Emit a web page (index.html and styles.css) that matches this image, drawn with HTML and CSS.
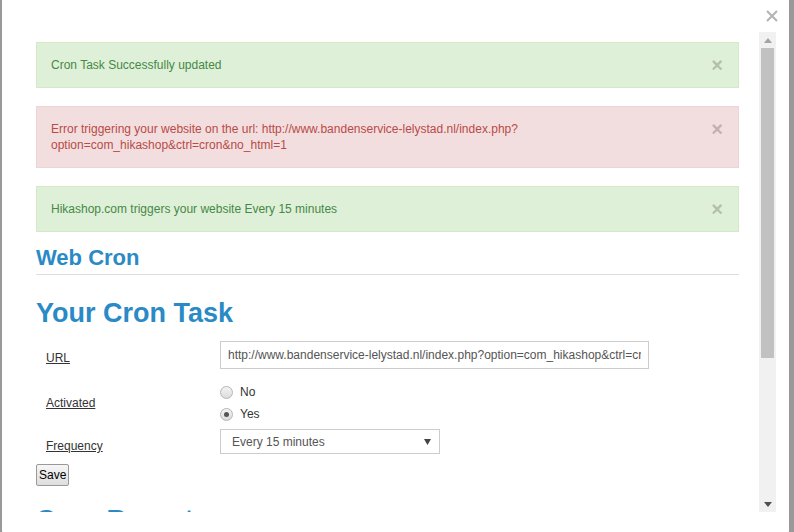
FILE: index.html
```html
<!DOCTYPE html>
<html>
  <head>
    <meta charset="utf-8" />
    <title>Web Cron</title>
    <link rel="stylesheet" href="styles.css">
  </head>
  <body>
    <div class="modal">
      <div class="modal-head">
        <span class="modal-close">
          <svg width="12" height="12" viewBox="0 0 12 12"><path d="M1 1L11 11M11 1L1 11" stroke="#b3b3b3" stroke-width="2"/></svg>
        </span>
      </div>

      <div class="frame">
        <div class="frame-body">
          <div class="alerts">
            <div class="alert success">
              <span class="msg">Cron Task Successfully updated</span>
              <span class="close">&times;</span>
            </div>
            <div class="alert error">
              <span class="msg">Error triggering your website on the url: http://www.bandenservice-lelystad.nl/index.php?<br>option=com_hikashop&amp;ctrl=cron&amp;no_html=1</span>
              <span class="close">&times;</span>
            </div>
            <div class="alert success">
              <span class="msg">Hikashop.com triggers your website Every 15 minutes</span>
              <span class="close">&times;</span>
            </div>
          </div>

          <h2 class="section">Web Cron</h2>
          <h1 class="title">Your Cron Task</h1>

          <form class="cron-form">
            <div class="row row-url">
              <label>URL</label>
              <input class="text" type="text" value="http://www.bandenservice-lelystad.nl/index.php?option=com_hikashop&amp;ctrl=cron&amp;no_html=1">
            </div>
            <div class="row row-active">
              <label>Activated</label>
              <div class="radios">
                <div class="radio"><span class="dot"></span>No</div>
                <div class="radio checked"><span class="dot"></span>Yes</div>
              </div>
            </div>
            <div class="row row-freq">
              <label>Frequency</label>
              <div class="select">
                <span>Every 15 minutes</span>
                <svg width="7" height="6" viewBox="0 0 7 6"><path d="M0 0H7L3.5 6Z" fill="#444"/></svg>
              </div>
            </div>
            <div class="actions">
              <button class="save" type="button">Save</button>
            </div>
          </form>

          <h1 class="title next">Cron Report</h1>
        </div>

        <div class="scrollbar">
          <div class="arrow">
            <svg width="8" height="5" viewBox="0 0 8 5"><path d="M0 5H8L4 0Z" fill="#a3a3a3"/></svg>
          </div>
          <div class="thumb"></div>
          <div class="track"></div>
          <div class="arrow">
            <svg width="8" height="5" viewBox="0 0 8 5"><path d="M0 0H8L4 5Z" fill="#505050"/></svg>
          </div>
        </div>
      </div>
    </div>
  </body>
</html>
```

FILE: styles.css
```css
html, body {
  height: 100%;
  margin: 0;
}
body {
  background-color: #999;
  color: #333;
  font-family: "Liberation Sans", Arial, sans-serif;
  font-size: 12px;
  overflow: hidden;
}
.modal {
  background-color: #fff;
  border-radius: 0 0 6px 6px;
  box-sizing: border-box;
  height: 536px;
  margin-left: 2px;
  padding: 0 13px 0 14px;
  width: 787px;
}
.modal-head {
  display: flex;
  height: 32px;
  justify-content: flex-end;
}
.modal-close {
  display: flex;
  margin: 10px -2px 0 0;
  height: 12px;
}
.frame {
  display: flex;
  height: 480px;
  overflow: hidden;
}
.frame-body {
  box-sizing: border-box;
  flex: 1;
  height: 480px;
  min-width: 0;
  overflow: hidden;
  padding: 10px 20px 0 20px;
}
.scrollbar {
  background-color: #f1f1f1;
  display: flex;
  flex-direction: column;
  width: 17px;
}
.scrollbar .arrow {
  align-items: center;
  display: flex;
  height: 16px;
  justify-content: center;
}
.scrollbar .thumb {
  background-color: #c1c1c1;
  height: 310px;
  margin: 0 2px;
}
.scrollbar .track {
  flex: 1;
}

/* alerts */
.alerts {
  display: flex;
  flex-direction: column;
  gap: 18px;
}
.alert {
  align-items: flex-start;
  border: 1px solid;
  display: flex;
  line-height: 16px;
  padding: 14px 15px 14px 14px;
}
.alert .msg {
  flex: 1;
}
.alert .close {
  color: #000;
  font-size: 20px;
  font-weight: bold;
  line-height: 16px;
  opacity: 0.2;
}
.success {
  background-color: #dff0d8;
  border-color: #d6e9c6;
  color: #468847;
}
.error {
  background-color: #f2dede;
  border-color: #eed3d7;
  color: #b94a48;
}

/* headings */
.section, .title {
  color: #2a8ac6;
  font-weight: bold;
}
.section {
  border-bottom: 1px solid #ddd;
  font-size: 22px;
  line-height: 26px;
  margin: 13px 0 0 0;
  padding-bottom: 3px;
}
.title {
  font-size: 27px;
  line-height: 32px;
  margin: 22px 0 0 0;
}
.title.next {
  margin-top: 18px;
}

/* form */
.cron-form {
  margin-top: 12px;
}
.row {
  align-items: center;
  display: flex;
}
.row label {
  box-sizing: border-box;
  flex: none;
  padding: 6px 0 0 10px;
  text-decoration: underline;
  width: 184px;
}
.row-active {
  margin-top: 12px;
}
.row-active label {
  padding-top: 0;
}
.row-freq {
  margin-top: 4px;
}
.row-freq label {
  padding-top: 9px;
}
.text {
  border: 1px solid #ccc;
  box-sizing: border-box;
  color: #555;
  font-family: inherit;
  font-size: 12px;
  height: 28px;
  margin: 0;
  outline: none;
  padding: 0 7px;
  width: 429px;
}
.radio {
  align-items: center;
  display: flex;
  height: 22px;
}
.radio .dot {
  background: linear-gradient(#f4f4f4, #dcdcdc);
  border: 1px solid #b5b5b5;
  border-radius: 50%;
  box-sizing: border-box;
  height: 13px;
  margin-right: 7px;
  position: relative;
  width: 13px;
}
.radio.checked .dot::after {
  background-color: #555;
  border-radius: 50%;
  content: "";
  height: 5px;
  left: 3px;
  position: absolute;
  top: 3px;
  width: 5px;
}
.select {
  align-items: center;
  border: 1px solid #ccc;
  box-sizing: border-box;
  color: #555;
  display: flex;
  height: 25px;
  justify-content: space-between;
  padding: 0 8px 0 11px;
  width: 220px;
}
.actions {
  display: flex;
  margin-top: 10px;
}
.save {
  background: linear-gradient(#f6f6f6, #dedede);
  border: 1px solid #999;
  border-radius: 2px;
  color: #000;
  font-family: inherit;
  font-size: 12px;
  height: 22px;
  padding: 0 2px;
}
```
